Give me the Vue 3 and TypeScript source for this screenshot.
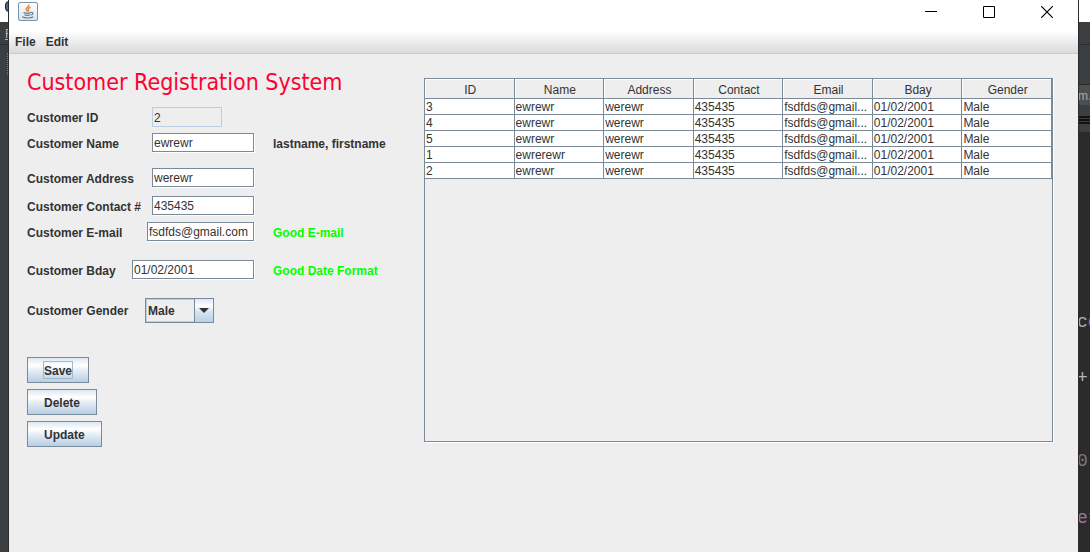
<script setup lang="ts">
import { ref } from 'vue'

interface Customer {
  id: string
  name: string
  address: string
  contact: string
  email: string
  bday: string
  gender: string
}

const columns = ['ID', 'Name', 'Address', 'Contact', 'Email', 'Bday', 'Gender']

const makeCustomer = (id: string, name: string): Customer => ({
  id,
  name,
  address: 'werewr',
  contact: '435435',
  email: 'fsdfds@gmail.com',
  bday: '01/02/2001',
  gender: 'Male',
})

const customers = ref<Customer[]>([
  makeCustomer('3', 'ewrewr'),
  makeCustomer('4', 'ewrewr'),
  makeCustomer('5', 'ewrewr'),
  makeCustomer('1', 'ewrerewr'),
  makeCustomer('2', 'ewrewr'),
])

const form = ref<Customer>(makeCustomer('2', 'ewrewr'))

function shorten(text: string, max = 15): string {
  return text.length > max ? text.slice(0, max - 3) + '...' : text
}
function save() {
  customers.value.push({ ...form.value })
}
function removeCustomer() {
  customers.value = customers.value.filter((c) => c.id !== form.value.id)
}
function update() {
  customers.value = customers.value.map((c) => (c.id === form.value.id ? { ...form.value } : c))
}
</script>

<template>
  <div class="desktop">
    <div class="edge edge-left">
      <div class="edge-title"><span class="app-dot"></span></div>
      <div class="edge-menu">F</div>
      <div class="edge-dots"></div>
    </div>

    <div class="window">
      <header class="titlebar">
        <svg class="java" width="20" height="20" viewBox="0 0 20 20" aria-hidden="true">
          <defs>
            <linearGradient id="tile" x1="0" y1="0" x2="0" y2="1">
              <stop offset="0" stop-color="#ffffff" />
              <stop offset="1" stop-color="#dde3e8" />
            </linearGradient>
          </defs>
          <rect x="0.5" y="0.5" width="19" height="18" rx="1.5" fill="url(#tile)" stroke="#7694aa" />
          <path d="M10.8 2.5c.8 2-2.700 3-2.700 4.700 0 1 .8 1.500 1.200 2.300M12.600 5.200c-1.800.7-2.800 1.500-2.300 2.400.4.700.5 1.200-.3 2" fill="none" stroke="#e8883a" stroke-width="1.500" />
          <path d="M5.500 10.500c2 .9 5.500.9 7.500 0M6.300 12.700c1.700.7 4.500.7 6.200 0M13 10.400c2.500-.6 2.500 1.900.2 2.500M4.300 14.800c2.500 1.500 8.500 1.500 11 0" fill="none" stroke="#587e9d" stroke-width="1.100" />
        </svg>
        <div class="window-buttons">
          <button type="button" aria-label="Minimize">
            <svg width="12" height="12" viewBox="0 0 12 12"><path d="M0 5.500h12" stroke="#000" /></svg>
          </button>
          <button type="button" aria-label="Maximize">
            <svg width="12" height="12" viewBox="0 0 12 12"><path d="M.5.5h11v11H.5z" fill="none" stroke="#000" /></svg>
          </button>
          <button type="button" aria-label="Close">
            <svg width="12" height="12" viewBox="0 0 12 12"><path d="M.3.3l11.400 11.400M11.700.3L.3 11.700" stroke="#000" stroke-width="1.200" /></svg>
          </button>
        </div>
      </header>

      <nav class="menubar">
        <button type="button">File</button>
        <button type="button">Edit</button>
      </nav>

      <main class="content">
        <form class="form" @submit.prevent>
          <h1>Customer Registration System</h1>
          <div class="row id-row">
            <label for="cid">Customer ID</label>
            <input id="cid" v-model="form.id" type="text" class="readonly" readonly />
          </div>
          <div class="row name-row">
            <label for="cname">Customer Name</label>
            <input id="cname" v-model="form.name" type="text" />
            <span class="hint">lastname, firstname</span>
          </div>
          <div class="row address-row">
            <label for="caddress">Customer Address</label>
            <input id="caddress" v-model="form.address" type="text" />
          </div>
          <div class="row contact-row">
            <label for="ccontact">Customer Contact #</label>
            <input id="ccontact" v-model="form.contact" type="text" />
          </div>
          <div class="row email-row">
            <label for="cemail">Customer E-mail</label>
            <input id="cemail" v-model="form.email" type="text" />
            <span class="hint good">Good E-mail</span>
          </div>
          <div class="row bday-row">
            <label for="cbday">Customer Bday</label>
            <input id="cbday" v-model="form.bday" type="text" />
            <span class="hint good">Good Date Format</span>
          </div>
          <div class="row gender-row">
            <label for="cgender">Customer Gender</label>
            <div class="combo">
              <select id="cgender" v-model="form.gender">
                <option>Male</option>
                <option>Female</option>
              </select>
              <span class="combo-arrow">
                <svg width="10" height="5" viewBox="0 0 10 5"><path d="M0 0h10L5 5z" fill="#333" /></svg>
              </span>
            </div>
          </div>
          <div class="actions">
            <button type="button" @click="save"><span class="focused">Save</span></button>
            <button type="button" @click="removeCustomer"><span>Delete</span></button>
            <button type="button" @click="update"><span>Update</span></button>
          </div>
        </form>

        <section class="table-pane">
          <table>
            <thead>
              <tr>
                <th v-for="c in columns" :key="c" scope="col">{{ c }}</th>
              </tr>
            </thead>
            <tbody>
              <tr v-for="c in customers" :key="c.id">
                <td>{{ c.id }}</td>
                <td>{{ c.name }}</td>
                <td>{{ c.address }}</td>
                <td>{{ c.contact }}</td>
                <td>{{ shorten(c.email) }}</td>
                <td>{{ c.bday }}</td>
                <td>{{ c.gender }}</td>
              </tr>
            </tbody>
          </table>
        </section>
      </main>
    </div>

    <div class="edge edge-right">
      <div class="edge-title"></div>
      <div class="edge-bar"></div>
      <div class="edge-tools"></div>
      <div class="edge-tab">m.</div>
      <div class="edge-lines"></div>
      <div class="code">
        <span class="c1">c<i>o</i></span>
        <span class="c2">+</span>
        <span class="c3">0</span>
        <span class="c4">et</span>
      </div>
    </div>
  </div>
</template>

<style>
body {
  margin: 0;
  background: #2b2b2b;
}
</style>

<style scoped>
* {
  box-sizing: border-box;
}
.desktop {
  display: grid;
  grid-template-columns: 9px minmax(0, 1fr) 12px;
  min-height: 100vh;
  font: 12px/14px "Liberation Sans", Arial, sans-serif;
  color: #333;
}
button,
input,
select {
  font: inherit;
  color: inherit;
  margin: 0;
  border-radius: 0;
}

.edge {
  overflow: hidden;
  background: #3c3f41;
  display: flex;
  flex-direction: column;
}
.edge-left {
  border-right: 1px solid #2b2b2b;
}
.edge-title {
  height: 22px;
  background: #fff;
  flex: none;
}
.app-dot {
  display: block;
  width: 8px;
  height: 11px;
  margin: 1px 0 0 5px;
  border: 1px solid #20242e;
  border-radius: 4px 0 0 4px;
  background: #4b66a8;
}
.edge-menu {
  height: 23px;
  padding: 5px 0 0 5px;
  border-bottom: 1px solid #2b2b2b;
  color: #a9b4c0;
  text-decoration: underline;
}
.edge-dots {
  height: 22px;
  margin: 8px 0 0 7px;
  border-left: 1px dotted #777;
}

.edge-right {
  border-left: 1px solid #2b2b2b;
}
.edge-bar {
  height: 23px;
  border-bottom: 1px solid #2b2b2b;
  flex: none;
}
.edge-tools {
  height: 40px;
  border-bottom: 1px solid #2b2b2b;
  flex: none;
}
.edge-tab {
  height: 20px;
  background: #4b4f52;
  color: #a9a9a9;
  font-size: 12px;
  line-height: 22px;
  text-indent: -1px;
  flex: none;
}
.edge-lines {
  height: 27px;
  flex: none;
  border-bottom: 8px solid #3c3f41;
  background: repeating-linear-gradient(#3c3f41 0 1px, #111 1px 3px) 0 100% / 100% 9px no-repeat;
}
.code {
  flex: 1;
  display: flex;
  flex-direction: column;
  background: #2b2b2b;
  font: 18px/20px "Liberation Mono", monospace;
  text-indent: -2px;
  padding-top: 180px;
}
.c1 {
  color: #9fb6b4;
}
.c1 i {
  font-style: normal;
  color: #4f86b8;
}
.c2 {
  margin-top: 36px;
  color: #a9b7c6;
}
.c3 {
  margin-top: 63px;
  color: #777;
}
.c4 {
  margin-top: 37px;
  color: #9876aa;
}

.window {
  display: flex;
  flex-direction: column;
  background: #eee;
}
.titlebar {
  height: 31px;
  display: flex;
  justify-content: space-between;
  background: #fff;
}
.java {
  margin: 2px 0 0 9px;
}
.window-buttons {
  display: flex;
  align-items: center;
  height: 24px;
  margin-right: 2px;
}
.window-buttons button {
  width: 58px;
  height: 24px;
  padding: 0;
  border: 0;
  background: none;
  display: grid;
  place-items: center;
}
.menubar {
  height: 23px;
  display: flex;
  gap: 10px;
  padding: 4px 6px 0;
  background: linear-gradient(#fff, #dadada);
  border-bottom: 1px solid #ccc;
}
.menubar button {
  height: 14px;
  padding: 0;
  border: 0;
  background: none;
  font-weight: 700;
}

.content {
  flex: 1;
  display: flex;
  align-items: flex-start;
  padding: 12px 25px 0 18px;
}
.form {
  flex: none;
  width: 397px;
}
h1 {
  margin: 0;
  font: 400 23px/32px "DejaVu Sans Condensed", Tahoma, sans-serif;
  color: #ff0033;
  white-space: nowrap;
}
.row {
  display: flex;
  align-items: center;
  height: 19px;
}
.row label,
.hint {
  padding-top: 2px;
  font-weight: 700;
  flex: none;
  white-space: nowrap;
}
.row label {
  width: 125px;
}
.row input {
  width: 102px;
  height: 19px;
  padding: 1px 1px 0;
  border: 1px solid #7a8a99;
  background: #fff;
  box-shadow: 1px 1px #fff;
  outline: none;
}
.row input.readonly {
  width: 70px;
  height: 20px;
  border-color: #b8cfe5;
  background: #eee;
  box-shadow: none;
}
.hint {
  margin-left: 19px;
}
.good {
  color: #00ff00;
}
.id-row {
  height: 20px;
  margin-top: 9px;
}
.name-row {
  margin-top: 6px;
}
.address-row {
  margin-top: 16px;
}
.contact-row {
  margin-top: 9px;
}
.email-row {
  margin-top: 7px;
}
.email-row label {
  width: 120px;
}
.email-row input {
  width: 107px;
}
.bday-row {
  margin-top: 19px;
}
.bday-row label {
  width: 105px;
}
.bday-row input {
  width: 122px;
}
.gender-row {
  height: 25px;
  margin-top: 19px;
}
.gender-row label {
  width: 118px;
  padding-top: 0;
}
.combo {
  position: relative;
  width: 69px;
  height: 25px;
}
.combo select {
  width: 100%;
  height: 100%;
  padding: 0 20px 0 2px;
  appearance: none;
  border: 1px solid #7a8a99;
  background: #eee;
  box-shadow: inset 1px 1px #b8cfe5, inset 0 -1px #b8cfe5;
  font-weight: 700;
  outline: none;
}
.combo-arrow {
  position: absolute;
  top: 0;
  right: 0;
  bottom: 0;
  width: 20px;
  display: grid;
  place-items: center;
  border: 1px solid #7a8a99;
  background: linear-gradient(#dde8f3, #fff 30%, #dde8f3 50%, #b8cfe5);
  pointer-events: none;
}
.actions {
  display: flex;
  flex-direction: column;
  align-items: flex-start;
  gap: 6px;
  margin-top: 34px;
}
.actions button {
  height: 26px;
  padding: 0 15px;
  border: 1px solid #7a8a99;
  background: linear-gradient(#dde8f3, #fff 30%, #dde8f3 60%, #b8cfe5);
  font-weight: 700;
}
.actions span {
  display: block;
  padding: 2px 0 0;
  border: 1px solid transparent;
}
.actions .focused {
  border-color: #a3b8cc;
}

.table-pane {
  flex: 1;
  min-width: 0;
  height: 364px;
  margin-top: 12px;
  border: 1px solid #7a8a99;
  box-shadow: 1px 1px #fff;
}
table {
  width: 100%;
  table-layout: fixed;
  border-collapse: separate;
  border-spacing: 0;
}
th,
td {
  border-right: 1px solid #7a8a99;
  border-bottom: 1px solid #7a8a99;
  white-space: nowrap;
  overflow: hidden;
  font-weight: 400;
}
th {
  height: 20px;
  padding: 3px 0 0 2px;
  line-height: 16px;
  text-align: center;
  box-shadow: inset 1px 1px #fff;
}
td {
  height: 16px;
  padding: 1px 0 0 1px;
  line-height: 14px;
  background: #fff;
}
</style>
